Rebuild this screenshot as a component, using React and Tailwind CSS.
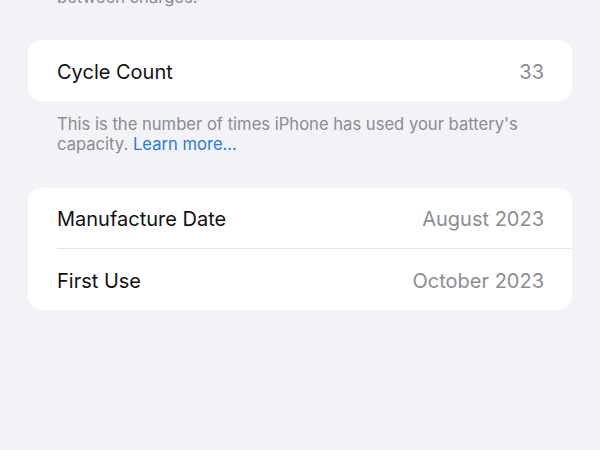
import React from "react";

const Row = ({ label, value, divider }) => (
  <div className="flex items-center h-[61px] pl-[29px]">
    <div
      className={`flex flex-1 items-center justify-between h-full pt-[2px] pr-[28px] ${
        divider ? "border-b border-[#e3e3e8]" : ""
      }`}
    >
      <span className="text-[#111113]">{label}</span>
      <span className="text-[#8c8c91]">{value}</span>
    </div>
  </div>
);

export default function App() {
  return (
    <div
      className="w-[600px] h-[450px] overflow-hidden bg-[#f2f2f7] px-[28px]"
      style={{ fontFamily: "Inter, 'Noto Sans', sans-serif" }}
    >
      <p className="-mt-[13px] px-[29px] text-[16.6px] leading-[20px] text-[#8c8c91]">
        between charges.
      </p>

      <div className="mt-[33px] bg-white rounded-[14px] text-[20px]">
        <Row label="Cycle Count" value="33" />
      </div>
      <p className="mt-[13px] px-[29px] text-[16.6px] leading-[20px] text-[#8c8c91]">
        This is the number of times iPhone has used your battery's
        <br />
        capacity. <span className="text-[#2f7bd0]">Learn more...</span>
      </p>

      <div className="mt-[34px] bg-white rounded-[14px] text-[20px]">
        <Row label="Manufacture Date" value="August 2023" divider />
        <Row label="First Use" value="October 2023" />
      </div>
    </div>
  );
}
